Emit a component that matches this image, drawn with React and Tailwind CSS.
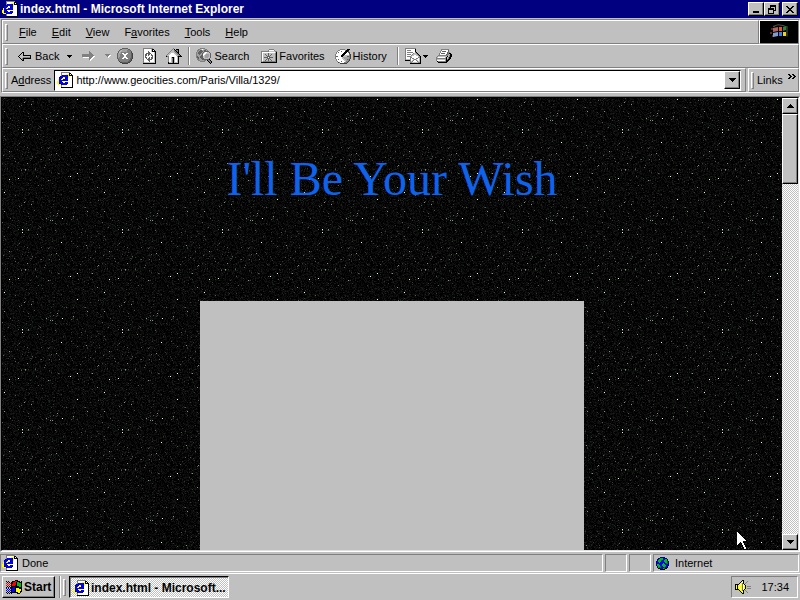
import React from 'react';
import clsx from 'clsx';

const raised =
  'border border-t-white border-l-white border-r-black border-b-black bg-[#c0c0c0] shadow-[inset_-1px_-1px_0_#808080]';
const sunken = 'border border-t-[#808080] border-l-[#808080] border-r-white border-b-white';
const dither = 'bg-[repeating-conic-gradient(#fff_0_25%,#c0c0c0_0_50%)] bg-[length:2px_2px]';

/* ---------- pixel art ---------- */

const palette = {
  K: '#000000',
  W: '#ffffff',
  G: '#808080',
  L: '#c0c0c0',
  D: '#404040',
  B: '#0000ff',
  N: '#000080',
  Y: '#ffff00',
  O: '#808000',
  R: '#ff0000',
  E: '#00c000',
  F: '#008000',
  M: '#a0a0a0',
  S: '#606060',
};

const Pixels = ({ rows, className }) => (
  <svg
    className={clsx('shrink-0', className)}
    width={rows[0].length}
    height={rows.length}
    shapeRendering="crispEdges"
    aria-hidden="true"
  >
    {rows.map((row, y) =>
      [...row].map((c, x) =>
        palette[c] ? <rect key={`${x}-${y}`} x={x} y={y} width="1" height="1" fill={palette[c]} /> : null
      )
    )}
  </svg>
);

const pageIcon = [
  '....GGGGGGGGG...',
  '....GWWWWWWWKK..',
  '....GWWWWYYYKWK.',
  '....GNBBBBNYKKKK',
  '...NBBBBBBBYWWWK',
  '..NBBNWYBBBYWWWK',
  '..BBBYYWNBBWWWWK',
  '.YBBYYBBBBBWWWWK',
  '.YBBBBBBBBNWWWWK',
  'YYBBNWWWWWWWWWWK',
  'YYBBBNWWNBBWWWWK',
  'YYNBBBBBBBNWWWWK',
  '.YYYNBBBBNWWWWWK',
  '....GWWWWWWWWWWK',
  '....GWWWWWWWWWWK',
  '....KKKKKKKKKKKK',
];

const backIcon = [
  '....KK.......',
  '...KLK.......',
  '..KLLK.......',
  '.KLLLKKKKKKKK',
  'KLLLLLLLLLLLK',
  '.KLLLGGGGGGGK',
  '..KLGKKKKKKKK',
  '...KGK.......',
  '....KK.......',
];

const forwardIcon = [
  '.......G.....',
  '.......GG....',
  '.......GGG...',
  'GGGGGGGGGGG..',
  'GGGGGGGGGGGG.',
  'GGGGGGGGGGGWW',
  '.WWWWWWGGGWW.',
  '.......GGWW..',
  '.......GWW...',
  '........W....',
];

const stopIcon = [
  '.....SSSSSS.....',
  '...SSMMMMMMSS...',
  '..SMLMMMMMGGGS..',
  '.SMLMMMMMMGGGGS.',
  '.SLMGGGGGGGGGGD.',
  'SMMMGWWGGWWGGGSD',
  'SMMGGGWWWWGGGGSD',
  'SMMGGGGWWGGGGGSD',
  'SMMGGGGWWGGGGGSD',
  'SMGGGGWWWWGGGGSD',
  'SGGGGWWGGWWGGSSD',
  '.SGGGGGGGGGGGSD.',
  '.SGGGGGGGGGGSSD.',
  '..DGGGGGGGGSSD..',
  '...DDSSSSSSDD...',
  '.....DDDDDD.....',
];

const refreshIcon = [
  'GGGGGGGGGG...',
  'GWWWWWWWLKK..',
  'GWWWWWWWLKWK.',
  'GWWWWSWWLKKKK',
  'GWWWWSSWWWWLK',
  'GWWSSSSSWWWLK',
  'GWSSWSSWSWWLK',
  'GWSSWSWWSSWLK',
  'GWSWWWWWWSWLK',
  'GWSSWWSWSSWLK',
  'GWWSWSSWSSWLK',
  'GWWWSSSSSWWLK',
  'GWWWWSSWWWWLK',
  'GWWWWWSWWWWLK',
  'GLLLLLLLLLLLK',
  'KKKKKKKKKKKKK',
];

const homeIcon = [
  '.......G........',
  '......GLK.KKK...',
  '.....GLLGKGGK...',
  '....GLLLGGKGK...',
  '...GLLLLLGGKK...',
  '..GLLWWWLLGGK...',
  '.GLLWWWWWLLGGK..',
  'GLLWWWWWWWLLGGK.',
  'KGGWWWWWWWWGKKKK',
  '..GWWLKKLWWLK...',
  '..GWWLGKLWWLK...',
  '..GWWLGKLWWLK...',
  '..GWWLGKLWWLK...',
  '..GWWLGKLWWLK...',
  '..KLLLGKLLLLK...',
  '..KKKKKKKKKKK...',
];

const searchIcon = [
  '....GGGGG.......',
  '..GGMLWLMGG.....',
  '.GGMSSMMSSMG....',
  '.GMSSSSMSSSSS...',
  'GMSSSSMSLWWLLS..',
  'GMSSSMSLWWLLLLS.',
  'GMMSMMSWWLMMMLS.',
  'GMMMMSSWLMMMMLS.',
  'GSMMSSSLLMMMMLS.',
  'GSSMSSSLLMMMLLS.',
  '.GSMMSSSLLLLLS..',
  '.GGMMMSSSSSSSK..',
  '..GGMMMMGG.KGGK.',
  '....GGGGG...KGGK',
  '.............KGK',
  '..............K.',
];

const favoritesIcon = [
  '........GGGGG...',
  '.......GWWWWWG..',
  'GGGGGGGGLLLLLLGG',
  'GWWWWWWWWWWWWWLK',
  'GWLLLLLSLLLLLLGK',
  'GWLLSLLSLLSLLLGK',
  'GWLLLSLSLSLLLLGK',
  'GWLLLLSSSLLLLLGK',
  'GWLSSSSWSSSSLLGK',
  'GWLLLLSSSLLLLLGK',
  'GWLLLSLSLSLLLLGK',
  'GWLLSLLSLLSLLLGK',
  'GLGGGGGGGGGGGGGK',
  'KKKKKKKKKKKKKKKK',
];

const historyIcon = [
  '.....GGGGG..KKK.',
  '...GGWWWWWGKKK..',
  '..GWWWSWWWKKKD..',
  '.GWSWWWWWKKKWSD.',
  '.GWWWWWWKKKWWWD.',
  'GWWWWWWKKKWWWWGD',
  'GWWWWWKKKLLLLLGD',
  'GSSWWWKKLLLLSSGD',
  'GWWWWWWLMMMMMMGD',
  'GWWWWWWLLMMMMMGD',
  '.GWSWWWWLLMMSGD.',
  '.GWWWWWWWLLMMGD.',
  '..GWWWSWWWLGGD..',
  '...DGWWWWGGGD...',
  '.....DDDDDDD....',
];

const mailIcon = [
  'GGGGGGGGGGG.....',
  'GWWWWWWWWWK.....',
  'GWGGGGWWWWK.....',
  'GWWWWWWWWWK.....',
  'GWGGGGGGWWGK....',
  'GWWWWWWWGLLGK...',
  'GWGGGGWGLLLLGK..',
  'GWWWWWGLLWWLLGK.',
  'GWGGGGLWWWWWWLGK',
  'GWWWWGGWWWWWWGGK',
  'GWWWWGWGGWWGGWLK',
  'GLLLLGWWLGGLWWLK',
  'KKKKKGWLGWWGLWLK',
  '.....GLGWWWWGLLK',
  '.....GGLLLLLLGGK',
  '.....KKKKKKKKKKK',
];

const printerIcon = [
  '.....GGGGGGGG...',
  '.....GWWWWWWS...',
  '....GWSSSSWWS...',
  '....GWWWWWWSGG..',
  '...GWSSSSWWSGKK.',
  '...GWWWWWWSGGLKK',
  '..GGGGGGGGGGLGKK',
  '.GLLLLLLLLLKLGKK',
  'GLWWWWWWWLKLGKK.',
  'GGGGGGGGGGKLGKK.',
  'GLLLLLLLLMKGKK..',
  'GWWWWWWWWMKKK...',
  '.KGGGGGGGGKK....',
  '..KKKKKKKKK.....',
];

const globeIcon = [
  '....NNNNN....',
  '..NNEEEBBNN..',
  '.NBEEEEBBEEN.',
  '.NEEEFBBEEEN.',
  'NBEEEBBBEEEFN',
  'NBBEBBBBBEEFN',
  'NBBBBBBEBBFFN',
  'NEEBBBEEEBBBN',
  'NEEEBBEEEEBBN',
  '.NEEFBBEEFBK.',
  '.NEFFBBBFBBK.',
  '..KKBBBEFKK..',
  '....KKKKK....',
];

const startIcon = [
  '.........KKK....',
  'K.K...KKKRRKKK.K',
  '.K.K.KKRRRKEEKKK',
  'R.R.RKKRRRKEEEEK',
  '.R.R.KRRRRKEEEEK',
  'R.R.RKRRRKKEEEEK',
  '.K.K.KKKKKKKKEEK',
  'K.K.KKKBBKKKKKKK',
  'B.B.BKBBBKYYYKKK',
  '.B.B.KBBBKYYYYYK',
  'B.B.BKBBBKYYYYYK',
  '.B.B.KBBKKYYYYKK',
  'K.K.KKKKKKKKYYK.',
  '.K.K.K.....KKK..',
];

const speakerIcon = [
  '.......KK.......',
  '......KYK...G...',
  '.....KYWK..G....',
  '....KYYOK.G.....',
  'KKKKYWYOWK......',
  'KYKYYWYOWYK.....',
  'KYKYWYYOWYK.GGGG',
  'KYKYWYYOWYK.....',
  'KYKYYWYOWYK.GGGG',
  'KKKKYWYOWK......',
  '....KYYOK.G.....',
  '.....KYWK..G....',
  '......KYK...G...',
  '.......KK.......',
];

const minimizeIcon = ['......', '......', '......', '......', '......', '......', 'KKKKKK', 'KKKKKK'];

const restoreIcon = [
  '..KKKKKK',
  '..KKKKKK',
  '..K....K',
  'KKKKKK.K',
  'KKKKKK.K',
  'K....KKK',
  'K....K..',
  'K....K..',
  'KKKKKK..',
];

const closeIcon = ['KK....KK', '.KK..KK.', '..KKKK..', '...KK...', '..KKKK..', '.KK..KK.', 'KK....KK'];
const downIcon = ['KKKKKKK', '.KKKKK.', '..KKK..', '...K...'];
const upIcon = ['...K...', '..KKK..', '.KKKKK.', 'KKKKKKK'];
const dropIcon = ['KKKKK', '.KKK.', '..K..'];
const dropOffIcon = ['GGGGG.', '.GGGWW', '..GWW.', '...W..'];
const chevronIcon = ['KK..KK..', '.KK..KK.', '..KK..KK', '.KK..KK.', 'KK..KK..'];

const cursorIcon = [
  'K...........',
  'WK..........',
  'WWK.........',
  'WWWK........',
  'WWWWK.......',
  'WWWWWK......',
  'WWWWWWK.....',
  'WWWWWWWK....',
  'WWWWWWWWK...',
  'WWWWWWWWWK..',
  'WWWWWWK.....',
  'WWWKWWK.....',
  'WWK.KWWK....',
  'WK..KWWK....',
  'K....KWWK...',
  '.....KWWK...',
  '......KWWK..',
  '......KWWK..',
  '.......KK...',
];

const FlyingWindow = () => (
  <svg width="20" height="16" viewBox="0 0 20 16" aria-hidden="true">
    <path d="M2 4h2v2H2zM1 8h2v2H1zM3 11h2v2H3zM4 2h2v1H4z" fill="#5a2a2a" />
    <path d="M4 4l5-1v4l-5 1z" fill="#a86464" />
    <path d="M4 9l5-1v4l-5 1z" fill="#7f9cd0" />
    <path d="M10 3h3v4h-3z" fill="#f05020" />
    <path d="M14 3l3-1v4l-3 1z" fill="#308030" />
    <path d="M10 8h3v4h-3z" fill="#3080e0" />
    <path d="M14 8h3v4h-3z" fill="#f0d020" />
    <path d="M4 2.500q5-3 10-1t4 1v10" fill="none" stroke="#4a5a4a" />
  </svg>
);

/* ---------- star field ---------- */

const brightStars = [
  [75, 1], [60, 20], [20, 31], [20, 34], [59, 44], [7, 81], [16, 80], [75, 75], [68, 78], [2, 94],
];
const mediumStars = [
  [22, 4], [29, 6], [55, 15], [2, 13], [44, 20], [48, 22], [50, 22], [26, 31], [35, 36], [85, 13],
  [71, 18], [84, 47], [54, 55], [25, 65], [23, 71], [90, 75], [46, 82], [7, 53], [96, 67], [95, 89],
];

const toPath = (points) => points.map(([x, y]) => `M${x} ${y}h1v1h-1z`).join('');

// mulberry32, so the field is the same on every load
const scatter = (count, seed) => {
  let s = seed;
  const next = () => {
    s = (s + 0x6d2b79f5) | 0;
    let t = Math.imul(s ^ (s >>> 15), 1 | s);
    t = (t + Math.imul(t ^ (t >>> 7), 61 | t)) ^ t;
    return Math.floor((((t ^ (t >>> 14)) >>> 0) / 4294967296) * 100);
  };
  return Array.from({ length: count }, () => [next(), next()]);
};

const starLayers = [
  ['#0a0b0a', toPath(scatter(5000, 11))],
  ['#121412', toPath(scatter(1800, 23))],
  ['#1e221e', toPath(scatter(450, 37))],
  ['#343a34', toPath(scatter(130, 41))],
  ['#525c52', toPath(scatter(50, 59))],
  ['#809480', toPath(mediumStars)],
  ['#e0ffe0', toPath(brightStars)],
];

const Stars = () => (
  <svg className="absolute inset-0 h-full w-full" shapeRendering="crispEdges" aria-hidden="true">
    <defs>
      <pattern id="stars" width="100" height="100" patternUnits="userSpaceOnUse">
        {starLayers.map(([fill, d]) => (
          <path key={fill} d={d} fill={fill} />
        ))}
      </pattern>
    </defs>
    <rect width="100%" height="100%" fill="url(#stars)" />
  </svg>
);

/* ---------- window chrome ---------- */

const Grip = () => (
  <span className="h-[17px] w-[3px] shrink-0 border border-t-white border-l-white border-r-[#808080] border-b-[#808080]" />
);

const Divider = () => <span className="h-[18px] w-0.5 shrink-0 border-l border-r border-l-[#808080] border-r-white" />;

const Band = ({ className, children }) => (
  <div
    className={clsx(
      'flex h-6 items-center border border-t-white border-l-white border-r-[#808080] border-b-[#808080] pl-0.5',
      className
    )}
  >
    <Grip />
    {children}
  </div>
);

const CaptionButton = ({ label, icon, className }) => (
  <button type="button" aria-label={label} className={clsx('flex h-3.5 w-4 items-center justify-center', raised, className)}>
    <Pixels rows={icon} />
  </button>
);

const ToolButton = ({ label, icon, text, className }) => (
  <button type="button" aria-label={label} className={clsx('flex shrink-0 items-center', className)}>
    <Pixels rows={icon} />
    {text && <span>{text}</span>}
  </button>
);

const menus = [
  ['', 'F', 'ile'],
  ['', 'E', 'dit'],
  ['', 'V', 'iew'],
  ['F', 'a', 'vorites'],
  ['', 'T', 'ools'],
  ['', 'H', 'elp'],
];

const TitleBar = () => (
  <header className="flex h-[18px] shrink-0 items-center bg-[#000080] px-0.5 text-white">
    <Pixels rows={pageIcon} />
    <span className="ml-0.5 flex-1 truncate text-xs font-bold">index.html - Microsoft Internet Explorer</span>
    <CaptionButton label="Minimize" icon={minimizeIcon} />
    <CaptionButton label="Restore" icon={restoreIcon} />
    <CaptionButton label="Close" icon={closeIcon} className="ml-0.5" />
  </header>
);

const Bars = () => (
  <div className="mt-px ml-px shrink-0 border border-t-[#808080] border-l-[#808080] border-r-white border-b-white">
    <div className="flex">
      <Band className="flex-1">
        <nav className="ml-1 flex gap-px">
          {menus.map(([before, key, after]) => (
            <button key={key} type="button" className="px-[7px]">
              {before}
              <u className="underline-offset-1">{key}</u>
              {after}
            </button>
          ))}
        </nav>
      </Band>
      <div className="flex h-6 w-10 items-center justify-center border border-t-white border-l-white border-r-[#808080] border-b-[#808080] bg-black">
        <FlyingWindow />
      </div>
    </div>

    <Band>
      <ToolButton label="Back" icon={backIcon} text="Back" className="ml-2.5 gap-1" />
      <ToolButton label="Back history" icon={dropIcon} className="ml-2" />
      <ToolButton label="Forward" icon={forwardIcon} className="ml-2.5" />
      <ToolButton label="Forward history" icon={dropOffIcon} className="ml-2.5" />
      <ToolButton label="Stop" icon={stopIcon} className="ml-1.5" />
      <ToolButton label="Refresh" icon={refreshIcon} className="ml-2.5" />
      <ToolButton label="Home" icon={homeIcon} className="ml-2.5" />
      <span className="ml-1.5 flex">
        <Divider />
      </span>
      <ToolButton label="Search" icon={searchIcon} text="Search" className="ml-1.5 gap-0.5" />
      <ToolButton label="Favorites" icon={favoritesIcon} text="Favorites" className="ml-3 gap-0.5" />
      <ToolButton label="History" icon={historyIcon} text="History" className="ml-2.5 gap-0.5" />
      <span className="ml-2.5 flex">
        <Divider />
      </span>
      <ToolButton label="Mail" icon={mailIcon} className="ml-1.5" />
      <ToolButton label="Mail options" icon={dropIcon} className="ml-0.5" />
      <ToolButton label="Print" icon={printerIcon} className="ml-2" />
    </Band>

    <div className="flex">
      <Band className="min-w-0 flex-1 pr-1">
        <label htmlFor="address" className="ml-[3px] shrink-0">
          A<u className="underline-offset-1">d</u>dress
        </label>
        <div className="ml-[3px] flex h-[21px] min-w-0 flex-1 items-center border border-t-black border-l-black border-r-white border-b-white bg-white pl-0.5">
          <Pixels rows={pageIcon} />
          <input
            id="address"
            type="text"
            defaultValue="http://www.geocities.com/Paris/Villa/1329/"
            className="ml-[3px] min-w-0 flex-1 bg-transparent outline-none"
          />
          <button
            type="button"
            aria-label="Show address list"
            className={clsx('flex h-[18px] w-4 items-center justify-center', raised)}
          >
            <Pixels rows={downIcon} />
          </button>
        </div>
      </Band>
      <Band className="ml-0.5 w-[51px]">
        <a href="#links" className="ml-[3px]">
          Links
        </a>
        <Pixels rows={chevronIcon} className="mb-2 ml-[5px]" />
      </Band>
    </div>
  </div>
);

const Scrollbar = () => (
  <div className={clsx('flex w-4 shrink-0 flex-col', dither)}>
    <button type="button" aria-label="Scroll up" className={clsx('flex h-4 items-center justify-center', raised)}>
      <Pixels rows={upIcon} />
    </button>
    <div className={clsx('h-[70px]', raised)} />
    <div className="flex-1" />
    <button type="button" aria-label="Scroll down" className={clsx('flex h-4 items-center justify-center', raised)}>
      <Pixels rows={downIcon} />
    </button>
  </div>
);

const Viewport = () => (
  <div className="mt-[3px] flex min-h-0 flex-1 border border-t-[#808080] border-l-[#808080] border-r-white border-b-white">
    <div className="flex min-w-0 flex-1 border border-t-black border-l-black border-r-[#dfdfdf] border-b-[#dfdfdf]">
      <main className="relative min-w-0 flex-1 overflow-hidden bg-black">
        <Stars />
        <div className="relative flex h-full flex-col items-center">
          <h1 className="mt-[53px] shrink-0 font-['Liberation_Serif',serif] text-5xl leading-14 text-[#0f62ec]">
            I'll Be Your Wish
          </h1>
          <div className="mt-[94px] w-96 flex-1 bg-[#c0c0c0]" />
        </div>
      </main>
      <Scrollbar />
    </div>
  </div>
);

const StatusBar = () => (
  <footer className="mt-0.5 flex h-[18px] shrink-0 gap-0.5 pr-px">
    <div className={clsx('flex flex-1 items-center gap-1 pl-px', sunken)}>
      <Pixels rows={pageIcon} />
      <span>Done</span>
    </div>
    <div className={clsx('w-[22px]', sunken)} />
    <div className={clsx('w-[22px]', sunken)} />
    <div className={clsx('flex w-[146px] items-center gap-1.5 pl-0.5', sunken)}>
      <Pixels rows={globeIcon} />
      <span>Internet</span>
    </div>
  </footer>
);

const Taskbar = () => (
  <div className="mt-px flex h-[27px] shrink-0 items-stretch border-t border-white px-0.5 py-0.5">
    <button type="button" className={clsx('flex w-[53px] items-center gap-0.5 pl-[3px] text-xs font-bold', raised)}>
      <Pixels rows={startIcon} />
      <span>Start</span>
    </button>
    <span className="ml-1 w-0.5 border-l border-r border-l-[#808080] border-r-white" />
    <span className="ml-0.5 flex items-center">
      <Grip />
    </span>
    <button
      type="button"
      className={clsx(
        'ml-[3px] flex w-40 items-center gap-0.5 border border-t-black border-l-black border-r-white border-b-white pt-0.5 pl-[3px] text-xs font-bold shadow-[inset_1px_1px_0_#808080]',
        dither
      )}
    >
      <Pixels rows={pageIcon} />
      <span className="whitespace-nowrap">index.html - Microsoft...</span>
    </button>
    <div className={clsx('ml-auto flex w-[67px] items-center justify-between pr-2 pl-[3px]', sunken)}>
      <Pixels rows={speakerIcon} />
      <time>17:34</time>
    </div>
  </div>
);

const App = () => (
  <div className="relative flex h-screen flex-col overflow-hidden bg-[#c0c0c0] font-['Liberation_Sans',Arial,sans-serif] text-[11px] leading-[13px] text-black">
    <TitleBar />
    <Bars />
    <Viewport />
    <StatusBar />
    <Taskbar />
    <Pixels rows={cursorIcon} className="pointer-events-none absolute right-[51px] bottom-[50px]" />
  </div>
);

export default App;
